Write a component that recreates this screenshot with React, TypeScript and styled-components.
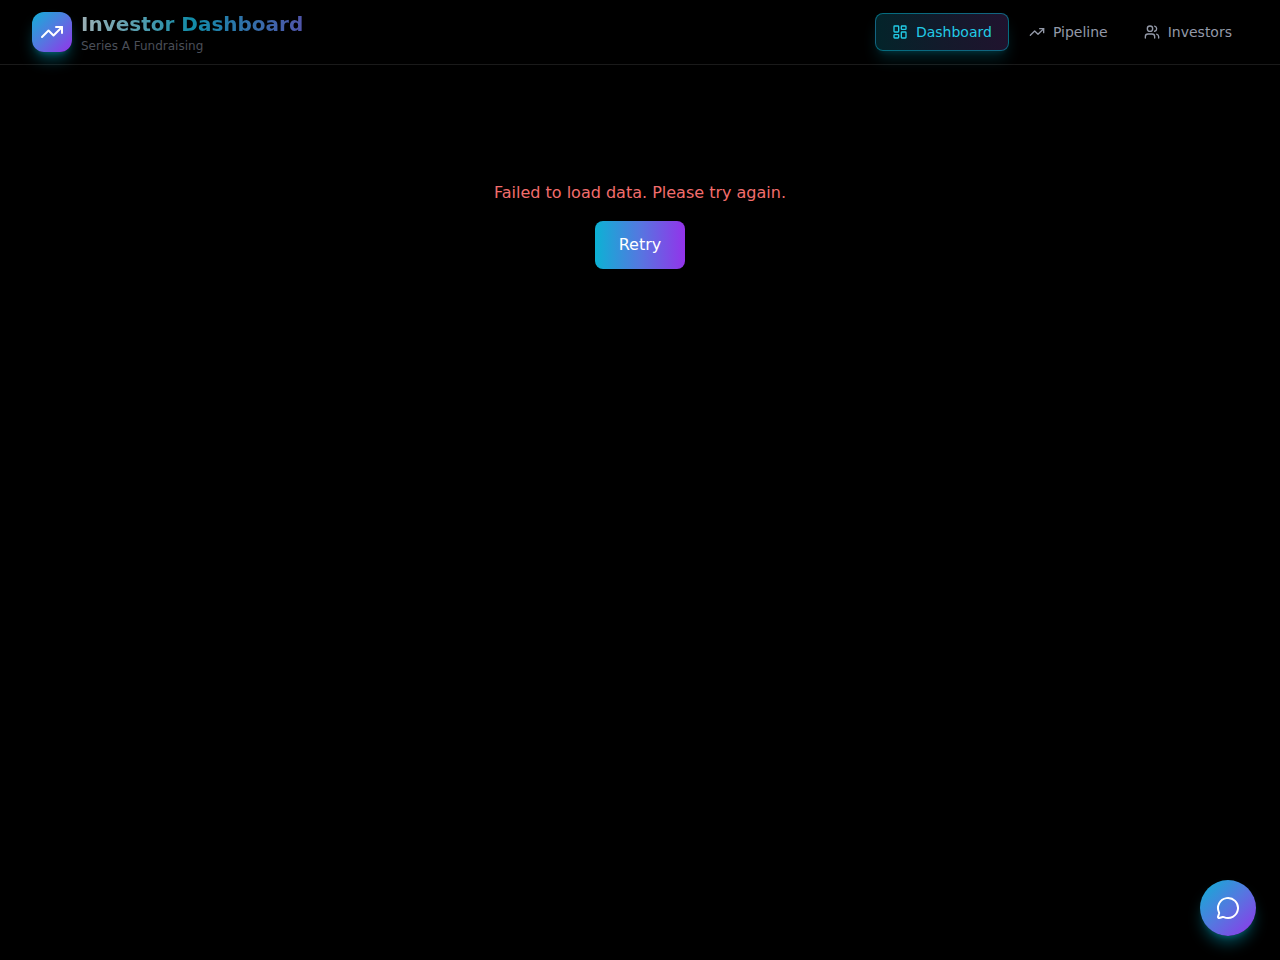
import React from "react";
import styled, { createGlobalStyle, css } from "styled-components";
import { LayoutDashboard, MessageCircle, TrendingUp, Users } from "lucide-react";

const GlobalStyle = createGlobalStyle`
  *, *::before, *::after { box-sizing: border-box; }
  body {
    margin: 0;
    background: #000;
    color: #fff;
    font-family: "DejaVu Sans", sans-serif;
    font-size: 16px;
    line-height: 1.5;
  }
`;

const Page = styled.div`
  min-height: 100vh;
  background: #000;
`;

const Header = styled.header`
  height: 65px;
  padding: 0 32px;
  display: flex;
  align-items: center;
  justify-content: space-between;
  border-bottom: 1px solid rgba(255, 255, 255, 0.1);
`;

const Brand = styled.div`
  display: flex;
  align-items: center;
  gap: 9px;
`;

const Logo = styled.div`
  width: 40px;
  height: 40px;
  display: flex;
  align-items: center;
  justify-content: center;
  border-radius: 12px;
  background: linear-gradient(to bottom right, #12b0d8, #5577e0 50%, #9333ea);
  box-shadow: 0 10px 15px -3px rgba(6, 182, 212, 0.4), 0 4px 6px -4px rgba(6, 182, 212, 0.4);
`;

const Title = styled.h1`
  margin: 0;
  font-size: 20px;
  line-height: 28px;
  font-weight: 700;
  color: transparent;
  background: linear-gradient(to right, #9bafb4, #128ca8 50%, #5055aa);
  background-clip: text;
  -webkit-background-clip: text;
`;

const Subtitle = styled.p`
  margin: 0;
  font-size: 12px;
  line-height: 16px;
  color: #4b4f59;
`;

const Nav = styled.nav`
  display: flex;
  align-items: center;
  gap: 4px;
`;

const NavItem = styled.a<{ $active?: boolean }>`
  display: flex;
  align-items: center;
  gap: 8px;
  height: 38px;
  padding: 0 16px;
  border-radius: 8px;
  font-size: 14px;
  line-height: 20px;
  color: #9399a8;
  ${(p) =>
    p.$active &&
    css`
      color: #22cbe6;
      border: 1px solid rgba(6, 182, 212, 0.5);
      background: linear-gradient(to right, #03242a, #131a2b 50%, #20132e);
      box-shadow: 0 10px 15px -3px rgba(6, 182, 212, 0.2), 0 4px 6px -4px rgba(6, 182, 212, 0.2);
    `}
`;

const Main = styled.main`
  padding: 116px 32px 0;
  display: flex;
  flex-direction: column;
  align-items: center;
  gap: 16px;
`;

const ErrorText = styled.p`
  margin: 0;
  color: #f26d6d;
`;

const RetryButton = styled.button`
  height: 48px;
  padding: 0 24px;
  border: 0;
  border-radius: 8px;
  font: inherit;
  color: #fff;
  background: linear-gradient(to right, #0cb2d4, #5577e0 50%, #9333ea);
`;

const ChatButton = styled.button`
  position: fixed;
  right: 24px;
  bottom: 24px;
  width: 56px;
  height: 56px;
  padding: 0;
  display: flex;
  align-items: center;
  justify-content: center;
  border: 0;
  border-radius: 50%;
  color: #fff;
  background: linear-gradient(to bottom right, #0cb2d4, #5577e0 50%, #9333ea);
  box-shadow: 0 10px 15px -3px rgba(6, 182, 212, 0.4), 0 4px 6px -4px rgba(6, 182, 212, 0.4);
`;

export default function App() {
  return (
    <Page>
      <GlobalStyle />
      <Header>
        <Brand>
          <Logo><TrendingUp size={24} /></Logo>
          <div>
            <Title>Investor Dashboard</Title>
            <Subtitle>Series A Fundraising</Subtitle>
          </div>
        </Brand>
        <Nav>
          <NavItem $active><LayoutDashboard size={16} />Dashboard</NavItem>
          <NavItem><TrendingUp size={16} />Pipeline</NavItem>
          <NavItem><Users size={16} />Investors</NavItem>
        </Nav>
      </Header>
      <Main>
        <ErrorText>Failed to load data. Please try again.</ErrorText>
        <RetryButton>Retry</RetryButton>
      </Main>
      <ChatButton aria-label="Open chat"><MessageCircle size={24} /></ChatButton>
    </Page>
  );
}
